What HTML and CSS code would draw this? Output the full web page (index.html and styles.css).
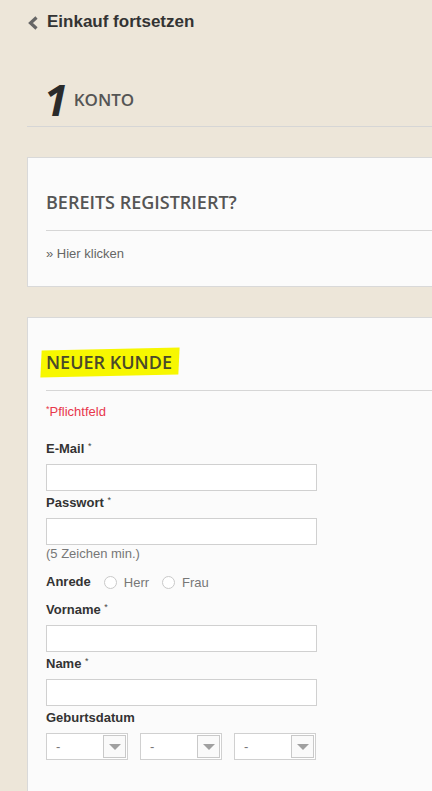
FILE: index.html
```html
<!DOCTYPE html>
<html lang="de">
<head>
<meta charset="utf-8">
<title>Kasse</title>
<link rel="stylesheet" href="styles.css">
</head>
<body>
<div class="page">
  <div class="topbar">
    <svg class="chev" width="10" height="14" viewBox="0 0 10 14"><polyline points="8.5,1.5 2.5,7 8.5,12.5" fill="none" stroke="#666" stroke-width="3.2" stroke-linejoin="miter"/></svg>
    <span class="back">Einkauf fortsetzen</span>
  </div>

  <div class="step">
    <span class="num">1</span>
    <span class="steptitle">KONTO</span>
  </div>

  <section class="card card-login">
    <div class="inner">
      <h2 class="head">BEREITS REGISTRIERT?</h2>
      <p class="link">» Hier klicken</p>
    </div>
  </section>

  <section class="card card-new">
    <div class="inner">
      <h2 class="head"><span class="mark">NEUER KUNDE</span></h2>
      <p class="required"><span class="star">*</span>Pflichtfeld</p>

      <div class="field first">
        <label class="lbl">E-Mail <span class="req">*</span></label>
        <input class="txt" type="text">
      </div>
      <div class="field">
        <label class="lbl">Passwort <span class="req">*</span></label>
        <input class="txt" type="text">
        <p class="hint">(5 Zeichen min.)</p>
      </div>
      <div class="radios">
        <span class="lbl">Anrede</span>
        <span class="opt"><span class="radio"></span>Herr</span>
        <span class="opt"><span class="radio"></span>Frau</span>
      </div>
      <div class="field">
        <label class="lbl">Vorname <span class="req">*</span></label>
        <input class="txt" type="text">
      </div>
      <div class="field">
        <label class="lbl">Name <span class="req">*</span></label>
        <input class="txt" type="text">
      </div>
      <div class="field">
        <label class="lbl">Geburtsdatum</label>
        <div class="selects">
          <div class="select"><span class="val">-</span><span class="arrow"></span></div>
          <div class="select"><span class="val">-</span><span class="arrow"></span></div>
          <div class="select"><span class="val">-</span><span class="arrow"></span></div>
        </div>
      </div>
    </div>
  </section>
</div>
</body>
</html>
```
FILE: styles.css
```css
html, body {
  margin: 0;
  padding: 0;
}
body {
  background: #ede6d9;
  font-family: "Liberation Sans", Arial, sans-serif;
  color: #333;
  overflow: hidden;
}
.page {
  padding-left: 27px;
}
.topbar {
  display: flex;
  align-items: center;
  padding: 12px 0 0 1px;
  height: 20px;
}
.chev {
  display: block;
  margin-right: 9px;
  margin-top: 1px;
}
.back {
  font-size: 17px;
  line-height: 20px;
  font-weight: bold;
  color: #333;
}
.step {
  display: flex;
  align-items: center;
  margin-top: 46px;
  padding: 0 0 5px 17px;
  border-bottom: 1px solid #d6d6d6;
}
.num {
  font-family: "Open Sans", sans-serif;
  font-style: italic;
  font-weight: 700;
  font-size: 43px;
  line-height: 43px;
  color: #2b2b2b;
  margin-right: 6px;
}
.steptitle {
  font-family: "Open Sans", sans-serif;
  font-weight: 600;
  font-size: 17px;
  line-height: 24px;
  color: #555;
  margin-top: 1px;
}
.card {
  margin: 30px -30px 0 0;
  background: #fbfbfb;
  border: 1px solid #d9d9d9;
}
.inner {
  padding-left: 18px;
}
.head {
  margin: 0;
  padding: 32px 0 16px;
  font-family: "Open Sans", sans-serif;
  font-weight: 600;
  font-size: 18px;
  line-height: 24px;
  color: #555;
  border-bottom: 1px solid #d6d6d6;
}
.link {
  margin: 14px 0 0;
  padding-bottom: 23px;
  font-size: 13px;
  line-height: 18px;
  color: #666;
}
.card-new {
  padding-bottom: 40px;
}
.mark {
  position: relative;
  z-index: 0;
  color: #4a4a2a;
}
.mark::before {
  content: "";
  position: absolute;
  left: -5px;
  right: -7px;
  top: -1px;
  bottom: -2px;
  background: #f7f700;
  transform: rotate(-1.3deg) skewX(-4deg);
  z-index: -1;
}
.required {
  margin: 12px 0 0;
  font-size: 13px;
  line-height: 18px;
  color: #e8384c;
}
.star {
  font-size: 9px;
  vertical-align: top;
  line-height: 12px;
}
.field.first {
  margin-top: 19px;
}
.lbl {
  display: block;
  font-size: 13px;
  line-height: 18px;
  font-weight: bold;
  color: #333;
  margin-bottom: 6px;
}
.req {
  font-size: 9px;
  font-weight: normal;
  vertical-align: top;
  line-height: 12px;
  color: #444;
}
.txt {
  display: block;
  box-sizing: border-box;
  width: 271px;
  height: 27px;
  margin: 0 0 3px;
  padding: 0 6px;
  border: 1px solid #d0d0d0;
  background: #fff;
  border-radius: 0;
  outline: none;
}
.hint {
  margin: -3px 0 0;
  font-size: 13px;
  line-height: 18px;
  color: #777;
}
.radios {
  display: flex;
  align-items: center;
  margin: 10px 0 10px;
  height: 18px;
}
.radios .lbl {
  margin: 0 13px 0 0;
}
.opt {
  display: flex;
  align-items: center;
  font-size: 13px;
  color: #777;
  margin-right: 13px;
}
.radio {
  box-sizing: border-box;
  width: 13px;
  height: 13px;
  border: 1px solid #c9c9c9;
  border-radius: 50%;
  background: #fff;
  margin-right: 7px;
}
.selects {
  display: flex;
  gap: 12px;
}
.select {
  box-sizing: border-box;
  width: 82px;
  height: 27px;
  border: 1px solid #d0d0d0;
  background: #fff;
  display: flex;
  align-items: center;
  padding: 0 1px 0 9px;
}
.val {
  flex: 1;
  font-size: 13px;
  color: #777;
}
.arrow {
  box-sizing: border-box;
  width: 23px;
  height: 23px;
  border: 1px solid #c9c9c9;
  background: #fafafa;
  display: flex;
  align-items: center;
  justify-content: center;
}
.arrow::after {
  content: "";
  width: 0;
  height: 0;
  border-left: 6px solid transparent;
  border-right: 6px solid transparent;
  border-top: 6px solid #a0a0a0;
}
```
